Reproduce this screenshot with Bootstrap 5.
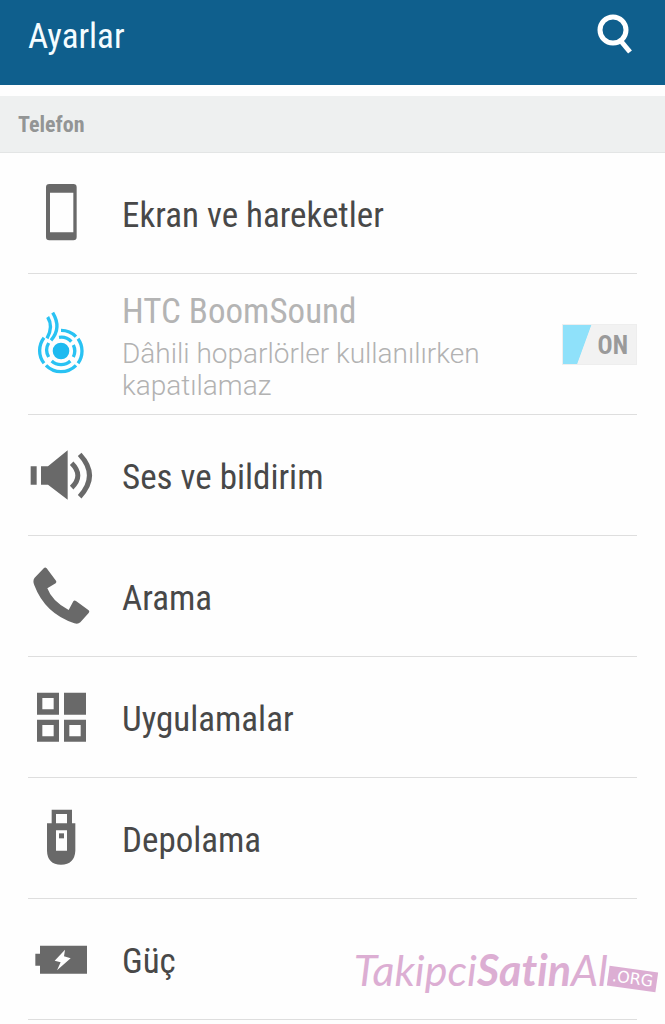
<!DOCTYPE html>
<html lang="tr">
<head>
<meta charset="utf-8">
<meta name="viewport" content="width=device-width, initial-scale=1">
<title>Ayarlar</title>
<link href="https://cdn.jsdelivr.net/npm/bootstrap@5.3.0/dist/css/bootstrap.min.css" rel="stylesheet">
<style>
  body { font-family: "Roboto Condensed", Roboto, sans-serif; background: #fefefe; color: #484848; }
  .app-bar { background: #0f5f8d; height: 85px; padding: 0 28px 12px; }
  .app-title { font-size: 35px; line-height: 40px; color: #f4fcff; }
  .search-btn { width: 48px; height: 48px; margin-right: -6px; }
  .section-title { background: #eef0f0; color: #939595; font-size: 22px; line-height: 24px; padding: 17px 18px 15px; margin-top: 11px; border-bottom: 1px solid #e3e5e5; }
  .settings { padding: 0 28px; }
  .setting { min-height: 121px; gap: 28px; border-bottom: 1px solid #dedede; }
  .setting svg { width: 66px; height: 66px; color: #696969; }
  .setting-link { gap: 28px; color: inherit; }
  .setting-name { font-size: 35px; line-height: 40px; padding-top: 6px; }
  .setting-tall { min-height: 141px; }
  .setting-tall .setting-name { color: #b4b4b4; }
  .setting-note { font-family: Roboto, sans-serif; font-weight: 300; font-size: 28px; line-height: 32px; color: #b2b2b2; max-width: 380px; padding-top: 6px; }
  .toggle { width: 75px; height: 41px; color: #9a9a9a; font-size: 25px; border: 1px solid #eee; background: linear-gradient(110deg, #8fe1fa 32%, #f2f2f2 33%); }
  .watermark { right: -20px; bottom: 25px; color: #dcaed3; font-family: Lato, sans-serif; font-style: italic; font-size: 43px; line-height: 48px; font-variant-ligatures: none; }
  .org-tag { font-family: "DejaVu Sans", sans-serif; font-style: normal; font-size: 16px; line-height: 20px; color: #fff; background: #dcaed3; padding: 0 4px; transform: rotate(8deg); margin-top: 23px; }
</style>
</head>
<body>
<header class="app-bar d-flex align-items-center justify-content-between">
  <h1 class="app-title fw-normal m-0">Ayarlar</h1>
  <button type="button" class="search-btn btn p-0 border-0 d-flex" aria-label="Ara">
    <svg width="48" height="48" viewBox="0 0 48 48" fill="none" stroke="#fff" stroke-width="5"><circle cx="18" cy="17" r="13"/><path d="M25 27L35 39"/></svg>
  </button>
</header>
<main>
  <h2 class="section-title fw-bold mb-0">Telefon</h2>
  <ul class="settings list-unstyled m-0">
    <li class="setting d-flex align-items-center">
      <a href="#" class="setting-link d-flex align-items-center text-decoration-none">
        <svg viewBox="24 31 198 198" aria-hidden="true"><path fill="currentColor" fill-rule="evenodd" d="M88 43H160Q170 43 170 53V202Q170 212 160 212H88Q78 212 78 202V53Q78 43 88 43ZM90 69V188H160V69Z"/></svg>
        <span class="setting-name">Ekran ve hareketler</span>
      </a>
    </li>
    <li class="setting setting-tall d-flex align-items-center">
      <svg class="flex-shrink-0" viewBox="24 34 198 198" aria-hidden="true" fill="none" stroke="#29c2f3" stroke-width="10"><circle cx="123" cy="154" r="25" fill="#1dbaf0" stroke="none"/><path d="M83 52Q101 81 81 116M98 39Q126 85 93 122M117 113A41 41 0 0 1 154 126M123 92A62 62 0 0 1 168 111M160 136A41 41 0 0 1 160 172M174 117A63 63 0 0 1 174 191M151 184A41 41 0 0 1 95 184M168 197A63 63 0 0 1 78 197M86 172A41 41 0 0 1 86 130M72 191A63 63 0 0 1 72 114"/></svg>
      <label for="boomsound" class="flex-grow-1">
        <span class="setting-name d-block">HTC BoomSound</span>
        <span class="setting-note d-block">Dâhili hoparlörler kullanılırken kapatılamaz</span>
      </label>
      <button id="boomsound" type="button" role="switch" aria-checked="true" class="toggle flex-shrink-0 fw-bold d-flex align-items-center justify-content-end p-0 pt-1 pe-2">ON</button>
    </li>
    <li class="setting d-flex align-items-center">
      <a href="#" class="setting-link d-flex align-items-center text-decoration-none">
        <svg viewBox="24 37 198 198" aria-hidden="true"><path fill="currentColor" d="M32 110H50V165H32ZM63 110H84L143 62V210L84 165H63Z"/><path fill="none" stroke="currentColor" stroke-width="15" d="M155 101Q192 138 155 174M179 74Q238 138 179 201"/></svg>
        <span class="setting-name">Ses ve bildirim</span>
      </a>
    </li>
    <li class="setting d-flex align-items-center">
      <a href="#" class="setting-link d-flex align-items-center text-decoration-none">
        <svg viewBox="24 25 198 198" aria-hidden="true"><path fill="currentColor" d="M72 40Q76 36 80 41L108 78Q111 82 107 86L82 101Q96 140 146 166L160 140Q163 135 168 139L206 167Q210 171 206 175L181 203Q174 210 163 206Q75 177 43 92Q37 78 44 69Z"/></svg>
        <span class="setting-name">Arama</span>
      </a>
    </li>
    <li class="setting d-flex align-items-center">
      <a href="#" class="setting-link d-flex align-items-center text-decoration-none">
        <svg viewBox="24 13 198 198" aria-hidden="true"><path fill="currentColor" fill-rule="evenodd" d="M51 39H117V105H51ZM67 55V89H101V55ZM132 39H198V105H132ZM51 120H117V186H51ZM67 136V170H101V136ZM132 120H198V186H132ZM148 136V170H182V136Z"/></svg>
        <span class="setting-name">Uygulamalar</span>
      </a>
    </li>
    <li class="setting d-flex align-items-center">
      <a href="#" class="setting-link d-flex align-items-center text-decoration-none">
        <svg viewBox="24 16 198 198" aria-hidden="true"><path fill="currentColor" fill-rule="evenodd" d="M95 30H156V71H166V153Q164 194 123 195Q82 194 81 153V71H95ZM108 43V71H141V43ZM108 92V153H141V92Z"/><path fill="currentColor" d="M117 101H132V116H117Z"/></svg>
        <span class="setting-name">Depolama</span>
      </a>
    </li>
    <li class="setting d-flex align-items-center position-relative">
      <a href="#" class="setting-link d-flex align-items-center text-decoration-none">
        <svg viewBox="24 4 198 198" aria-hidden="true"><path fill="currentColor" d="M60 63H201V147H60V123H46V87H60Z"/><path fill="#fff" d="M135 75L104 108L122 113L111 137L152 101L132 95Z"/></svg>
        <span class="setting-name">Güç</span>
      </a>
      <div class="watermark position-absolute d-flex"><span>Takipci</span><span class="fw-bold">Satin</span><span>Al</span><span class="org-tag align-self-start">.ORG</span></div>
    </li>
  </ul>
</main>
<script src="https://cdn.jsdelivr.net/npm/bootstrap@5.3.0/dist/js/bootstrap.bundle.min.js"></script>
</body>
</html>
